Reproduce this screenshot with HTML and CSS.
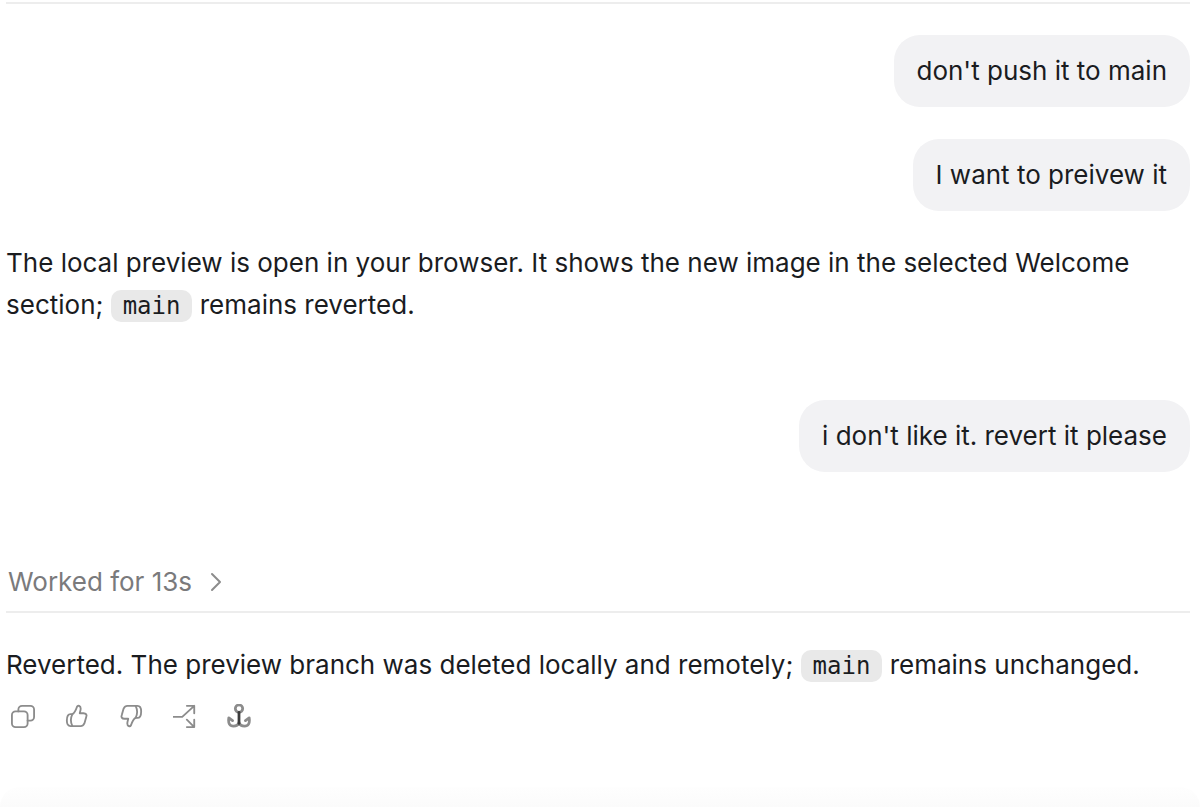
FILE: index.html
```html
<!DOCTYPE html>
<html lang="en">
<head>
    <meta charset="UTF-8">
    <meta name="viewport" content="width=device-width, initial-scale=1">
    <title>Chat</title>
    <link rel="stylesheet" href="styles.css">
</head>
<body>
    <main class="thread">
        <div class="user-messages">
            <p class="bubble">don't push it to main</p>
            <p class="bubble">I want to preivew it</p>
        </div>

        <p class="reply">The local preview is open in your browser. It shows the new image in the selected Welcome section; <code>main</code> remains reverted.</p>

        <div class="user-messages last">
            <p class="bubble">i don't like it. revert it please</p>
        </div>

        <button class="worked" type="button">
            Worked for 13s
            <svg width="12" height="20" viewBox="0 0 12 20"><path d="M2 2l8 8-8 8"/></svg>
        </button>

        <p class="reply">Reverted. The preview branch was deleted locally and remotely; <code>main</code> remains unchanged.</p>

        <div class="actions">
            <button type="button" aria-label="Copy">
                <svg viewBox="0 0 26 26">
                    <rect x="1" y="8" width="17" height="17" rx="4"/>
                    <path d="M8 8V6a4 4 0 0 1 4-4h9a4 4 0 0 1 4 4v8a4 4 0 0 1-4 4h-3"/>
                </svg>
            </button>
            <button type="button" aria-label="Good response">
                <svg viewBox="0 0 26 26">
                    <path d="M8 11c2-1 4-5 5-8 1-2 4-1 4 2 0 2-1 4-1 5h4c3 0 4 2 3 4l-2 7c-1 2-2 3-4 3H6c-3 0-4-3-4-6 0-4 1-7 4-7h2"/>
                    <path d="M8 11c-2 4-2 9 0 13"/>
                </svg>
            </button>
            <button type="button" aria-label="Bad response">
                <svg viewBox="0 0 26 26">
                    <path d="M18 15c-2 1-4 5-5 8-1 2-4 1-4-2 0-2 1-4 1-5H6c-3 0-4-2-3-4l2-7c1-2 2-3 4-3h11c3 0 4 3 4 6 0 4-1 7-4 7h-2"/>
                    <path d="M18 15c2-4 2-9 0-13"/>
                </svg>
            </button>
            <button type="button" aria-label="Fork">
                <svg viewBox="0 0 26 26">
                    <path d="M0 14h10L23 2M15 2h8v8M15 17l8 8M23 17v8h-8"/>
                </svg>
            </button>
            <button type="button" aria-label="Anchor">
                <svg class="anchor" viewBox="0 0 26 26">
                    <circle cx="13" cy="5" r="4"/>
                    <path d="M2 15c-1 6 1 9 5 9 3 0 5-1 6-4 1 3 3 4 6 4 4 0 6-3 5-9M2 15l4 3M24 15l-4 3"/>
                    <path class="shank" d="M13 9v12"/>
                </svg>
            </button>
        </div>
    </main>
    <footer class="composer-edge"></footer>
</body>
</html>
```
FILE: styles.css
```css
* {
    box-sizing: border-box;
}

body {
    margin: 0;
    min-height: 100vh;
    display: flex;
    flex-direction: column;
    background: #fff;
    color: #1a1c1f;
    font-family: Inter, "Noto Sans", sans-serif;
    font-size: 26px;
    line-height: 42px;
}

p {
    margin: 0;
}

.thread {
    flex: 1;
    margin: 2px 10px 0 6px;
    border-top: 2px solid #ededed;
}

.user-messages {
    display: flex;
    flex-direction: column;
    align-items: flex-end;
    gap: 32px;
    padding: 31px 0;
}

.user-messages.last {
    padding: 74px 0 88px;
}

.bubble {
    padding: 15px 23px;
    border-radius: 26px;
    background: #f2f2f4;
}

code {
    display: inline-block;
    padding: 2px 12px;
    border-radius: 10px;
    background: #e9e9e9;
    font-family: "DejaVu Sans Mono", monospace;
    font-size: 24px;
    line-height: 28px;
}

button {
    border: none;
    background: none;
    font: inherit;
    cursor: pointer;
}

svg {
    fill: none;
    stroke: #8c8c8c;
    stroke-width: 2;
    stroke-linecap: round;
    stroke-linejoin: round;
}

.anchor {
    stroke-width: 3;
}

.shank {
    stroke: #3c3c3c;
}

.worked {
    display: flex;
    align-items: center;
    gap: 18px;
    width: 100%;
    margin-bottom: 31px;
    padding: 1px 2px 8px;
    border-bottom: 2px solid #ededed;
    color: #7a7a7c;
}

.actions {
    display: flex;
    gap: 30px;
    padding: 18px 5px;
}

.actions button {
    display: flex;
    padding: 0;
}

.actions svg {
    width: 24px;
    height: 24px;
}

/* top of the composer's shadow */
.composer-edge {
    height: 20px;
    border-radius: 20px 20px 0 0;
    background: linear-gradient(#fefefe, #fbfbfb);
}
```
